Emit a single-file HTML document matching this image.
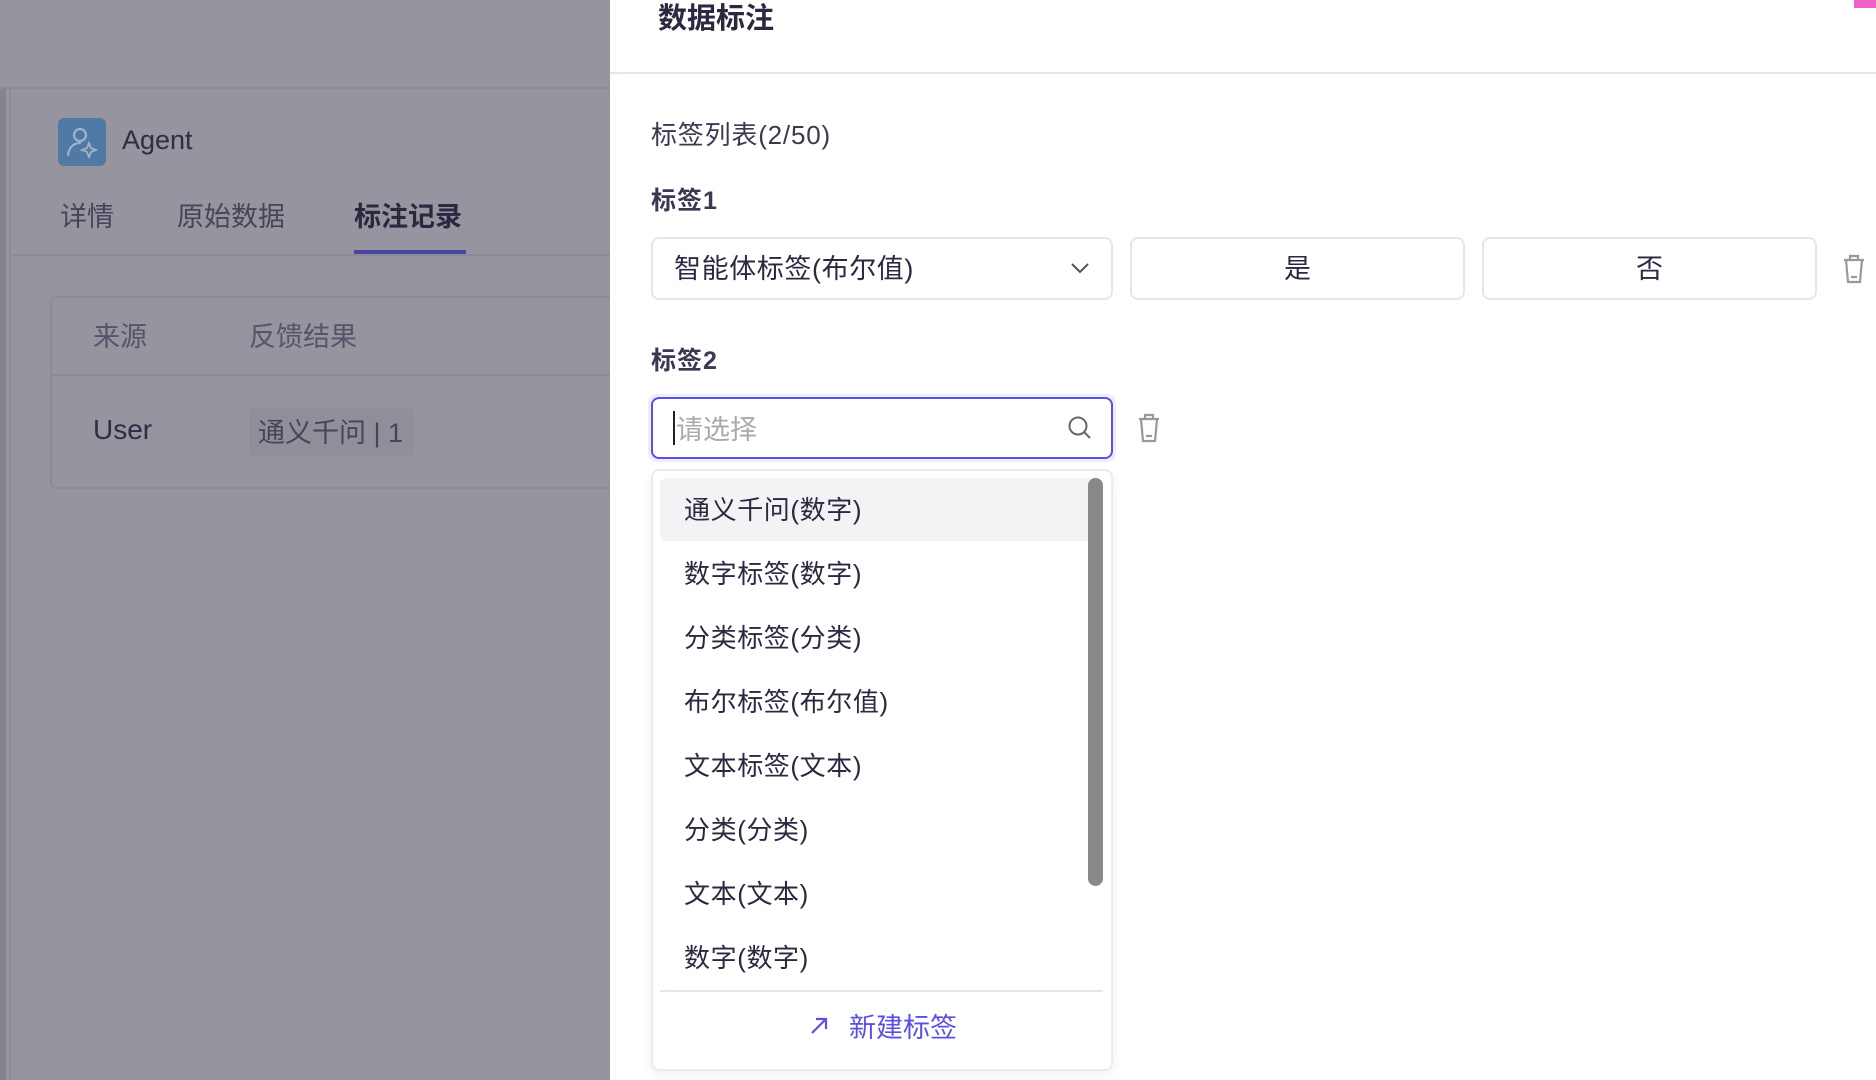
<!DOCTYPE html>
<html><head><meta charset="utf-8"><style>
*{margin:0;padding:0;box-sizing:border-box}
body{width:1876px;height:1080px;overflow:hidden;position:relative;background:#fff;font-family:"Liberation Sans","Noto Sans CJK SC",sans-serif;color:#2a2940}
.a{position:absolute;white-space:nowrap}
#left{position:absolute;left:0;top:0;width:610px;height:1080px;background:#96959f;overflow:hidden}
.box{position:absolute;border:2px solid #e6e5ec;border-radius:8px;background:#fff}
.it{position:absolute;left:684px;font-size:26px;color:#2a2940;line-height:30px;letter-spacing:0.6px}
</style></head><body>
<div id="left">
 <div class="a" style="left:0;top:87px;width:610px;height:2px;background:#8c8b96"></div>
 <div class="a" style="left:0;top:89px;width:6px;height:991px;background:#85848e"></div>
 <div class="a" style="left:9px;top:89px;width:2px;height:991px;background:#8d8c97"></div>
 <div class="a" style="left:58px;top:118px;width:48px;height:48px;border-radius:6px;background:#4f7aa6">
  <svg width="48" height="48" viewBox="0 0 48 48" fill="none" stroke="#9fb3c8" stroke-width="2.2" stroke-linecap="round"><circle cx="22" cy="17" r="6"/><path d="M10 37c1-8 6-12 12-12"/><path d="M31 25l2 5 5 2-5 2-2 5-2-5-5-2 5-2z" stroke-width="1.8"/></svg>
 </div>
 <div class="a" style="left:122px;top:125px;font-size:27px;color:#2e2d45">Agent</div>
 <div class="a" style="left:60px;top:195px;font-size:27px;color:#45445a">详情</div>
 <div class="a" style="left:177px;top:195px;font-size:27px;color:#45445a">原始数据</div>
 <div class="a" style="left:354px;top:195px;font-size:27px;color:#2a2940;font-weight:bold">标注记录</div>
 <div class="a" style="left:354px;top:250px;width:112px;height:4px;background:#4a45a0"></div>
 <div class="a" style="left:10px;top:254px;width:600px;height:2px;background:#8c8b96"></div>
 <div class="a" style="left:50px;top:296px;width:580px;height:193px;border:2px solid #8c8b96;border-radius:6px"></div>
 <div class="a" style="left:52px;top:374px;width:560px;height:2px;background:#8c8b96"></div>
 <div class="a" style="left:93px;top:315px;font-size:27px;color:#55546a">来源</div>
 <div class="a" style="left:249px;top:315px;font-size:27px;color:#55546a">反馈结果</div>
 <div class="a" style="left:93px;top:414px;font-size:28px;color:#2e2d45">User</div>
 <div class="a" style="left:249px;top:408px;width:165px;height:48px;border-radius:6px;background:#8f8e99"></div>
 <div class="a" style="left:258px;top:411px;font-size:27px;color:#45445a">通义千问 | 1</div>
</div>
<div class="a" style="left:1854px;top:0;width:22px;height:8px;background:#f060c8"></div>
<div class="a" style="left:658px;top:-5px;font-size:29px;font-weight:bold;color:#2a2940">数据标注</div>
<div class="a" style="left:610px;top:72px;width:1266px;height:2px;background:#e6e5ec"></div>
<div class="a" style="left:651px;top:115px;font-size:26px;color:#3a3950;letter-spacing:0.8px">标签列表(2/50)</div>
<div class="a" style="left:651px;top:181px;font-size:25px;font-weight:bold;color:#3a3950;letter-spacing:1px">标签1</div>
<div class="box" style="left:651px;top:237px;width:462px;height:63px"></div>
<div class="a" style="left:674px;top:247px;font-size:27px;letter-spacing:0.6px">智能体标签(布尔值)</div>
<svg class="a" style="left:1069px;top:260px" width="22" height="16" viewBox="0 0 22 16" fill="none" stroke="#555" stroke-width="2"><path d="M3 4l8 8 8-8"/></svg>
<div class="box" style="left:1130px;top:237px;width:335px;height:63px"></div>
<div class="a" style="left:1284px;top:247px;font-size:27px">是</div>
<div class="box" style="left:1482px;top:237px;width:335px;height:63px"></div>
<div class="a" style="left:1636px;top:247px;font-size:27px">否</div>
<svg class="a" style="left:1840px;top:252px" width="28" height="34" viewBox="0 0 28 34" fill="none" stroke="#999" stroke-width="2.2"><path d="M4 8h20M10 8V4h8v4M6 8l2 22h12l2-22M11 25h6"/></svg>
<div class="a" style="left:651px;top:341px;font-size:25px;font-weight:bold;color:#3a3950;letter-spacing:1px">标签2</div>
<div class="a" style="left:648px;top:394px;width:468px;height:68px;border-radius:9px;background:#eeedfc"></div>
<div class="a" style="left:651px;top:397px;width:462px;height:62px;border:2px solid #5b50e6;border-radius:8px;background:#fff"></div>
<div class="a" style="left:673px;top:411px;width:2px;height:34px;background:#222"></div>
<div class="a" style="left:676px;top:408px;font-size:27px;color:#aaa">请选择</div>
<svg class="a" style="left:1066px;top:414px" width="28" height="28" viewBox="0 0 28 28" fill="none" stroke="#666" stroke-width="2"><circle cx="12" cy="12" r="8.5"/><path d="M18 18l6 6"/></svg>
<svg class="a" style="left:1135px;top:411px" width="28" height="34" viewBox="0 0 28 34" fill="none" stroke="#999" stroke-width="2.2"><path d="M4 8h20M10 8V4h8v4M6 8l2 22h12l2-22M11 25h6"/></svg>
<div class="a" style="left:651px;top:469px;width:462px;height:602px;border:2px solid #ebeaf0;border-radius:8px;background:#fff;box-shadow:0 4px 12px rgba(0,0,0,.06)"></div>
<div class="a" style="left:660px;top:478px;width:443px;height:63px;border-radius:6px;background:#f3f3f6"></div>
<div class="a" style="left:1088px;top:478px;width:15px;height:408px;border-radius:8px;background:#888"></div>
<div class="it" style="top:495px">通义千问(数字)</div>
<div class="it" style="top:559px">数字标签(数字)</div>
<div class="it" style="top:623px">分类标签(分类)</div>
<div class="it" style="top:687px">布尔标签(布尔值)</div>
<div class="it" style="top:751px">文本标签(文本)</div>
<div class="it" style="top:815px">分类(分类)</div>
<div class="it" style="top:879px">文本(文本)</div>
<div class="it" style="top:943px">数字(数字)</div>
<div class="a" style="left:660px;top:990px;width:443px;height:2px;background:#e6e5ec"></div>
<svg class="a" style="left:808px;top:1015px" width="22" height="22" viewBox="0 0 22 22" fill="none" stroke="#5b50e6" stroke-width="2.2"><path d="M4 18L18 4M8 4h10v10"/></svg>
<div class="a" style="left:849px;top:1006px;font-size:27px;color:#5b50e6">新建标签</div>
</body></html>
